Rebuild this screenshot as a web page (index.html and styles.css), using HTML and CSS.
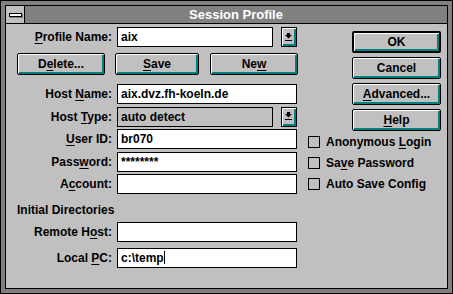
FILE: index.html
```html
<!DOCTYPE html>
<html lang="en">
<head>
    <meta charset="UTF-8">
    <title>Session Profile</title>
    <link rel="stylesheet" href="styles.css">
</head>
<body>
    <div class="window">
        <div class="frame">
            <div class="titlebar">
                <div class="sysmenu"><span></span></div>
                <div class="title">Session Profile</div>
            </div>

            <div class="content">
                <div class="left">
                    <div class="row">
                        <div class="label"><u>P</u>rofile Name:</div>
                        <div class="field short">aix</div>
                        <div class="drop">
                            <svg width="7" height="8" viewBox="0 0 7 8"><rect x="2" y="0" width="3" height="2"/><polygon points="0,2 7,2 3.5,5.5"/><rect x="0" y="7" width="7" height="1"/></svg>
                        </div>
                    </div>

                    <div class="buttons">
                        <button class="btn btn-delete">D<u>e</u>lete...</button>
                        <button class="btn btn-save"><u>S</u>ave</button>
                        <button class="btn btn-new">Ne<u>w</u></button>
                    </div>

                    <div class="rows">
                        <div class="row">
                            <div class="label">Host <u>N</u>ame:</div>
                            <div class="field">aix.dvz.fh-koeln.de</div>
                        </div>
                        <div class="row">
                            <div class="label">Host <u>T</u>ype:</div>
                            <div class="field combo">auto detect</div>
                            <div class="drop">
                                <svg width="7" height="8" viewBox="0 0 7 8"><rect x="2" y="0" width="3" height="2"/><polygon points="0,2 7,2 3.5,5.5"/><rect x="0" y="7" width="7" height="1"/></svg>
                            </div>
                        </div>
                        <div class="row">
                            <div class="label"><u>U</u>ser ID:</div>
                            <div class="field">br070</div>
                        </div>
                        <div class="row">
                            <div class="label">Pass<u>w</u>ord:</div>
                            <div class="field">********</div>
                        </div>
                        <div class="row">
                            <div class="label">A<u>c</u>count:</div>
                            <div class="field"></div>
                        </div>
                    </div>

                    <div class="heading">Initial Directories</div>

                    <div class="row">
                        <div class="label">Remote H<u>o</u>st:</div>
                        <div class="field"></div>
                    </div>
                    <div class="row local">
                        <div class="label">Local <u>P</u>C:</div>
                        <div class="field">c:\temp<span class="caret"></span></div>
                    </div>
                </div>

                <div class="right">
                    <div class="side-buttons">
                        <button class="btn side default">OK</button>
                        <button class="btn side">Cancel</button>
                        <button class="btn side"><u>A</u>dvanced...</button>
                        <button class="btn side"><u>H</u>elp</button>
                    </div>
                    <div class="checks">
                        <div class="check"><span class="box"></span><span>Anonymous <u>L</u>ogin</span></div>
                        <div class="check"><span class="box"></span><span>Sa<u>v</u>e Password</span></div>
                        <div class="check"><span class="box"></span><span>Auto Save Config</span></div>
                    </div>
                </div>
            </div>
        </div>
    </div>
</body>
</html>
```

FILE: styles.css
```css
body {
    margin: 0;
    font-family: "Liberation Sans", Arial, sans-serif;
    font-size: 12px;
    font-weight: bold;
    color: #000;
}
u {
    text-underline-offset: 2px;
}
.window {
    width: 453px;
    height: 294px;
    box-sizing: border-box;
    background: #808080;
    border: 1px solid #000;
    padding: 4px;
}
.frame {
    height: 100%;
    box-sizing: border-box;
    border: 1px solid #000;
    background: #c0c0c0;
}
.titlebar {
    display: flex;
    height: 18px;
    box-sizing: border-box;
    border-bottom: 1px solid #000;
    background: #808080;
}
.sysmenu {
    width: 19px;
    box-sizing: border-box;
    border-right: 1px solid #000;
    background: #c0c0c0;
    display: flex;
    align-items: center;
    justify-content: center;
}
.sysmenu span {
    width: 11px;
    height: 2px;
    background: #fff;
    border: 1px solid #000;
    box-shadow: 1px 1px #808080;
}
.title {
    flex: 1;
    color: #fff;
    font-size: 13px;
    line-height: 17px;
    text-align: center;
}
.content {
    display: flex;
    padding-top: 3px;
}
.left {
    width: 292px;
}
.row {
    display: flex;
    align-items: center;
    height: 20px;
}
.label {
    width: 111px;
    box-sizing: border-box;
    padding-right: 5px;
    text-align: right;
    white-space: nowrap;
}
.field {
    width: 180px;
    height: 20px;
    box-sizing: border-box;
    border: 1px solid #000;
    background: #fff;
    padding-left: 3px;
    line-height: 18px;
    white-space: nowrap;
}
.field.short {
    width: 156px;
}
.field.combo {
    width: 156px;
    background: #c0c0c0;
}
.drop {
    width: 16px;
    height: 20px;
    margin-left: 8px;
    box-sizing: border-box;
    border: 1px solid #000;
    background: #c0c0c0;
    box-shadow: inset 1px 1px #fff, inset -2px -2px #008080;
    display: flex;
    align-items: center;
    justify-content: center;
    padding: 0 1px 1px 0;
}
.caret {
    display: inline-block;
    width: 1px;
    height: 13px;
    background: #000;
    vertical-align: -2px;
}
.btn {
    font-family: inherit;
    font-size: 12px;
    font-weight: bold;
    color: #000;
    height: 22px;
    padding: 0 0 1px 0;
    box-sizing: border-box;
    border: 1px solid #000;
    border-radius: 2px;
    background: #c0c0c0;
    box-shadow: inset 1px 1px #fff, inset -2px -2px #008080;
}
.buttons {
    display: flex;
    margin: 6px 0 0 11px;
}
.btn-delete {
    width: 88px;
}
.btn-save {
    width: 84px;
    margin-left: 10px;
}
.btn-new {
    width: 88px;
    margin-left: 11px;
}
.rows {
    display: flex;
    flex-direction: column;
    gap: 2.5px;
    margin-top: 9px;
}
.heading {
    margin: 9px 0 5px 11px;
    height: 14px;
    line-height: 14px;
}
.local {
    margin-top: 6px;
}
.right {
    margin-left: 10px;
    padding-top: 4px;
}
.side-buttons {
    display: flex;
    flex-direction: column;
    gap: 4px;
    margin-left: 44px;
}
.side {
    width: 89px;
}
.default {
    border-width: 2px;
}
.check {
    display: flex;
    align-items: center;
    height: 21px;
}
.box {
    width: 12px;
    height: 12px;
    box-sizing: border-box;
    border: 1px solid #000;
    margin-right: 6px;
}
```
